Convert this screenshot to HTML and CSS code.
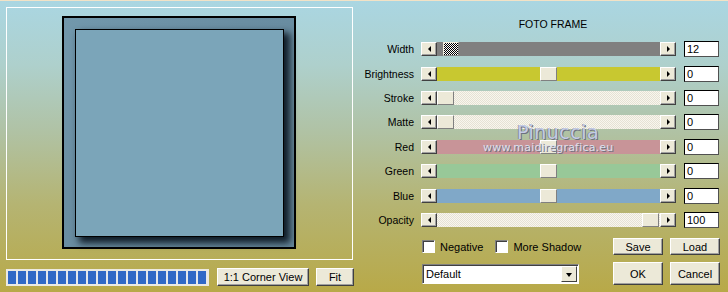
FILE: index.html
```html
<!DOCTYPE html>
<html lang="en">
<head>
  <meta charset="UTF-8" />
  <title>Foto Frame</title>
  <link rel="stylesheet" href="styles.css">
</head>
<body>
  <div class="dialog">
    <div class="left">
      <div class="preview">
        <div class="frame">
          <div class="photo"></div>
        </div>
      </div>
      <div class="bottom-bar">
        <div class="progress"></div>
        <button class="btn corner">1:1 Corner View</button>
        <button class="btn fit">Fit</button>
      </div>
    </div>

    <div class="right">
      <div class="title">FOTO FRAME</div>
      <div class="sliders">
        <label>Width</label>
        <div class="scroll"><span class="arrow l"></span><div class="track gray"><span class="thumb checker" style="left: 6px"></span></div><span class="arrow r"></span></div>
        <div class="field">12</div>

        <label>Brightness</label>
        <div class="scroll"><span class="arrow l"></span><div class="track yellow"><span class="thumb" style="left: 103px"></span></div><span class="arrow r"></span></div>
        <div class="field">0</div>

        <label>Stroke</label>
        <div class="scroll"><span class="arrow l"></span><div class="track dither"><span class="thumb" style="left: 0"></span></div><span class="arrow r"></span></div>
        <div class="field">0</div>

        <label>Matte</label>
        <div class="scroll"><span class="arrow l"></span><div class="track dither"><span class="thumb" style="left: 0"></span></div><span class="arrow r"></span></div>
        <div class="field">0</div>

        <label>Red</label>
        <div class="scroll"><span class="arrow l"></span><div class="track red"><span class="thumb" style="left: 103px"></span></div><span class="arrow r"></span></div>
        <div class="field">0</div>

        <label>Green</label>
        <div class="scroll"><span class="arrow l"></span><div class="track green"><span class="thumb" style="left: 103px"></span></div><span class="arrow r"></span></div>
        <div class="field">0</div>

        <label>Blue</label>
        <div class="scroll"><span class="arrow l"></span><div class="track blue"><span class="thumb" style="left: 103px"></span></div><span class="arrow r"></span></div>
        <div class="field">0</div>

        <label>Opacity</label>
        <div class="scroll"><span class="arrow l"></span><div class="track dither"><span class="thumb" style="left: 205px"></span></div><span class="arrow r"></span></div>
        <div class="field">100</div>
      </div>

      <div class="lower">
        <div class="checks">
          <span class="check"><span class="box"></span>Negative</span>
          <span class="check"><span class="box"></span>More Shadow</span>
        </div>
        <button class="btn">Save</button>
        <button class="btn">Load</button>
        <div class="select"><span class="value">Default</span><span class="drop"></span></div>
        <button class="btn big">OK</button>
        <button class="btn big">Cancel</button>
      </div>

      <div class="watermark">
        <div class="wm-name">Pinuccia</div>
        <div class="wm-url">www.maidiregrafica.eu</div>
      </div>
    </div>
  </div>
</body>
</html>
```

FILE: styles.css
```css
body { margin: 0; font-family: "Liberation Sans", Arial, sans-serif; font-size: 10.5px; color: #000; }
.dialog { width: 728px; height: 292px; box-sizing: border-box; border-top: 1px solid #f2e2c6; display: flex; background: linear-gradient(#aad6e2 0%, #aed0cc 22%, #b0c2a4 45%, #b5b472 70%, #b8a948 100%); }

.left { width: 360px; padding: 6px 0 0 6px; box-sizing: border-box; }
.preview { width: 347px; height: 253px; box-sizing: border-box; border: 1px solid #fff; padding: 8px 0 0 55px; }
.frame { width: 234px; height: 233px; box-sizing: border-box; border: 2px solid #000; background: linear-gradient(135deg, #7298ac, #6a8ea2 40%, #67889c); padding: 11px; }
.photo { width: 209px; height: 208px; box-sizing: border-box; border: 1px solid #000; background: #7ba5b9; box-shadow: 5px 5px 7px 1px rgba(5, 15, 25, 0.9); }

.bottom-bar { display: flex; align-items: center; margin-top: 8px; }
.progress { width: 203px; height: 17px; box-sizing: border-box; border: 2px solid #eceae2; background: repeating-linear-gradient(90deg, #3169c6 0 8px, #e6e8ec 8px 10px) #e6e8ec; background-size: 200px 100%; background-repeat: no-repeat; margin-right: 8px; }

.btn { font: inherit; background: #ece9d8; border: 1px solid; border-color: #fff #404040 #404040 #fff; box-shadow: inset -1px -1px #a0a0a0; padding: 0; height: 17px; color: #000; }
.corner { width: 92px; height: 18px; margin-right: 7px; font-size: 11px; }
.fit { width: 38px; height: 18px; font-size: 11px; }

.right { position: relative; flex: 1; padding-top: 17px; }
.title { margin-left: 61px; width: 264px; text-align: center; height: 12px; line-height: 12px; }
.sliders { display: grid; grid-template-columns: 54px 255px 36px; column-gap: 7px; grid-auto-rows: 24.43px; align-items: center; margin-top: 7px; }
.sliders > :nth-child(3n) { margin-left: 1px; }
.sliders label { text-align: right; }
.scroll { display: flex; height: 14px; }
.arrow { width: 16px; height: 14px; box-sizing: border-box; background: #ece9d8; border: 1px solid; border-color: #fff #404040 #404040 #fff; box-shadow: inset -1px -1px #a0a0a0; position: relative; }
.arrow::after { content: ""; position: absolute; top: 3px; border: 3px solid transparent; }
.arrow.l::after { left: 3px; border-right: 3px solid #000; }
.arrow.r::after { left: 6px; border-left: 3px solid #000; }
.track { flex: 1; position: relative; }
.thumb { position: absolute; top: 0; width: 17px; height: 14px; box-sizing: border-box; background: #ece9d8; border: 1px solid; border-color: #fff #808080 #808080 #fff; }
.thumb.checker { width: 16px; background: repeating-conic-gradient(#000 0 25%, #fff 0 50%) 0 0 / 2px 2px; border-color: #ece9d8 #808080 #808080 #ece9d8; }
.gray { background: #808080; }
.yellow { background: #c8c830; }
.red { background: #c89498; }
.green { background: #98c898; }
.blue { background: #80a8c8; }
.dither { background: repeating-conic-gradient(#f8f6ee 0 25%, #e6e2d4 0 50%) 0 0 / 2px 2px; }
.field { height: 16px; box-sizing: border-box; background: #fff; border: 1px solid; border-color: #000 #505050 #505050 #000; line-height: 14px; padding-left: 2px; font-size: 11px; }

.lower { display: grid; grid-template-columns: 184px 50px 50px; grid-template-rows: 17px 23px; column-gap: 7px; row-gap: 7px; margin: 6px 0 0 62px; align-items: center; }
.checks { display: flex; align-items: center; font-size: 11px; }
.check { display: flex; align-items: center; margin-right: 12px; }
.box { width: 13px; height: 13px; box-sizing: border-box; background: #fff; border: 1px solid; border-color: #808080 #fff #fff #808080; box-shadow: inset 1px 1px #404040; margin-right: 5px; }
.lower .btn { height: 17px; font-size: 11px; }
.lower .btn.big { height: 23px; }
.select { width: 157px; height: 20px; box-sizing: border-box; background: #fff; border: 1px solid; border-color: #808080 #fff #fff #808080; box-shadow: inset 1px 1px #404040; display: flex; align-items: center; font-size: 11px; }
.value { flex: 1; padding-left: 3px; }
.drop { width: 16px; height: 16px; margin-right: 1px; box-sizing: border-box; background: #ece9d8; border: 1px solid; border-color: #fff #404040 #404040 #fff; position: relative; }
.drop::after { content: ""; position: absolute; left: 4px; top: 6px; border: 3.5px solid transparent; border-top: 4px solid #000; }

.watermark { position: absolute; left: 131px; top: 121px; width: 120px; text-align: center; pointer-events: none; }
.wm-name { font-family: "DejaVu Sans", sans-serif; font-size: 19px; line-height: 20px; letter-spacing: 0.5px; color: #c4cce6; text-shadow: 1px 1px 0 #6c7080, -1px 0 0 rgba(90, 90, 110, 0.5); margin-left: 14px; }
.wm-url { font-family: "DejaVu Sans", sans-serif; font-size: 11px; line-height: 12px; color: #dce0ee; text-shadow: 1px 1px 0 #707080; letter-spacing: 0.2px; margin-left: -8px; }
```
